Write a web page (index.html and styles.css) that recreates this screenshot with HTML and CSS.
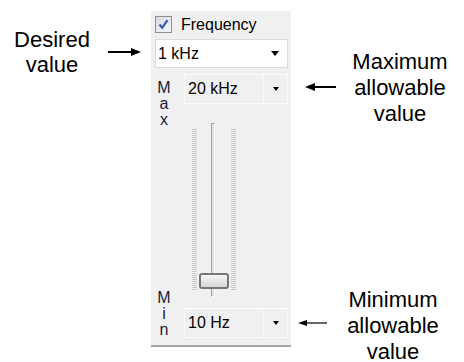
FILE: index.html
```html
<!DOCTYPE html>
<html lang="en">
<head>
    <meta charset="UTF-8">
    <title>Frequency setting</title>
    <link rel="stylesheet" href="styles.css">
</head>
<body>
    <div class="figure">
        <div class="side-left">
            <div class="note-row">
                <div class="note note-left">Desired<br>value</div>
                <svg class="arrow-right" width="34" height="12" viewBox="0 0 34 12">
                    <line x1="0" y1="6" x2="24" y2="6" stroke="#000" stroke-width="2"/>
                    <polygon points="23,2 33,6 23,10" fill="#000"/>
                </svg>
            </div>
        </div>

        <div class="panel">
            <div class="check-row">
                <span class="checkbox">
                    <svg width="13" height="13" viewBox="0 0 13 13">
                        <path d="M2.5 6.5 L5.2 9.8 L10.5 2.2" fill="none" stroke="#3d56b5" stroke-width="2.2"/>
                    </svg>
                </span>
                <span class="check-label">Frequency</span>
            </div>
            <div class="combo combo-main">
                <span class="combo-text">1 kHz</span>
                <span class="combo-arrow"></span>
            </div>

            <div class="range">
                <div class="letters">
                    <div class="letter-stack">
                        <span>M</span><span>a</span><span>x</span>
                    </div>
                    <div class="letter-stack">
                        <span>M</span><span>i</span><span>n</span>
                    </div>
                </div>
                <div class="range-body">
                    <div class="combo combo-limit">
                        <span class="combo-text">20 kHz</span>
                        <span class="combo-btn"><span class="combo-arrow small"></span></span>
                    </div>
                    <div class="slider">
                        <div class="ticks"></div>
                        <div class="track">
                            <div class="thumb"></div>
                        </div>
                        <div class="ticks"></div>
                    </div>
                    <div class="combo combo-limit">
                        <span class="combo-text">10 Hz</span>
                        <span class="combo-btn"><span class="combo-arrow small"></span></span>
                    </div>
                </div>
            </div>
        </div>

        <div class="side-right">
            <div class="note-row note-max">
                <svg class="arrow-left" width="32" height="12" viewBox="0 0 32 12">
                    <polygon points="0,6 10,2 10,10" fill="#000"/>
                    <line x1="9" y1="6" x2="31" y2="6" stroke="#000" stroke-width="2"/>
                </svg>
                <div class="note note-right">Maximum<br>allowable<br>value</div>
            </div>
            <div class="note-row note-min">
                <svg class="arrow-left thin" width="30" height="10" viewBox="0 0 30 10">
                    <polygon points="0,5 9,2 9,8" fill="#000"/>
                    <line x1="8" y1="5" x2="29" y2="5" stroke="#000" stroke-width="1.2"/>
                </svg>
                <div class="note note-right">Minimum<br>allowable<br>value</div>
            </div>
        </div>
    </div>
</body>
</html>
```

FILE: styles.css
```css
body {
    margin: 0;
    background-color: white;
    font-family: "Liberation Sans", Arial, sans-serif;
    color: #000;
}
.figure {
    display: flex;
    align-items: flex-start;
    width: 464px;
    height: 362px;
    overflow: hidden;
}

/* annotations */
.note {
    font-size: 22px;
    text-align: center;
}
.note-row {
    display: flex;
    align-items: center;
}
.side-left {
    width: 151px;
    padding-top: 27px;
}
.note-left {
    width: 104px;
    line-height: 25px;
}
.arrow-right {
    margin-left: 4px;
}
.side-right {
    display: flex;
    flex-direction: column;
}
.note-right {
    width: 106px;
    line-height: 26px;
}
.note-max {
    margin-top: 49px;
}
.note-min {
    margin-top: 160px;
}
.arrow-left {
    margin-left: 14px;
    margin-right: 10px;
    margin-top: -2px;
}
.arrow-left.thin {
    margin-left: 7px;
    margin-right: 12px;
    margin-top: -6px;
}

/* the control panel */
.panel {
    width: 133px;
    height: 329px;
    margin-top: 11px;
    background-color: #f0f0f0;
    border-bottom: 2px solid #a6a6a6;
    padding: 5px 3px 0 4px;
    font-size: 16px;
}
.check-row {
    display: flex;
    align-items: center;
    height: 17px;
}
.checkbox {
    width: 15px;
    height: 15px;
    border: 1px solid #8f8f8f;
    background: linear-gradient(135deg, #d5dbe3, #f4f6f9);
    display: flex;
    align-items: center;
    justify-content: center;
}
.check-label {
    margin-left: 9px;
}
.combo {
    display: flex;
    align-items: center;
    box-sizing: border-box;
}
.combo-main {
    margin-top: 6px;
    width: 133px;
    height: 29px;
    background-color: white;
    border: 1px solid #dadada;
    padding-left: 2px;
}
.combo-text {
    flex: 1;
}
.combo-arrow {
    width: 0;
    height: 0;
    border-left: 4px solid transparent;
    border-right: 4px solid transparent;
    border-top: 5px solid #000;
    margin-right: 8px;
}
.combo-arrow.small {
    border-left-width: 3.5px;
    border-right-width: 3.5px;
    border-top-width: 4px;
    margin-right: 0;
}
.combo-limit {
    width: 104px;
    height: 30px;
    background-color: #f0f0f0;
    border: 1px solid #fbfbfb;
    padding-left: 3px;
}
.combo-btn {
    width: 23px;
    align-self: stretch;
    border-left: 1px solid #fbfbfb;
    display: flex;
    align-items: center;
    justify-content: center;
}

/* max / min range with slider */
.range {
    display: flex;
    margin-top: 6px;
}
.letters {
    width: 29px;
    display: flex;
    flex-direction: column;
    justify-content: space-between;
    padding-left: 2px;
    box-sizing: border-box;
    line-height: 16px;
    color: #1a1a40;
}
.letter-stack {
    display: flex;
    flex-direction: column;
    align-items: flex-start;
}
.letter-stack span {
    width: 14px;
    text-align: center;
}
.letters .letter-stack:first-child {
    padding-top: 6px;
}
.range-body {
    display: flex;
    flex-direction: column;
}
.slider {
    display: flex;
    align-items: stretch;
    height: 174px;
    margin: 19px 0 11px 8px;
}
.ticks {
    width: 5px;
    margin: 6px 0 7px 0;
    background: repeating-linear-gradient(to bottom, #c8c8c8 0, #c8c8c8 1px, transparent 1px, transparent 2px);
}
.track {
    position: relative;
    width: 2px;
    margin: 0 16px 0 14px;
    background-color: #e4e4e4;
    border-left: 1px solid #a0a0a0;
    border-top: 1px solid #a0a0a0;
    border-right: 1px solid white;
    border-bottom: 1px solid white;
}
.thumb {
    position: absolute;
    left: -13px;
    bottom: 7px;
    width: 26px;
    height: 12px;
    border: 2px solid #777;
    border-radius: 3px;
    background: linear-gradient(to bottom, #f6f6f6, #e2e2e2 60%, #d6d6d6);
}
```
